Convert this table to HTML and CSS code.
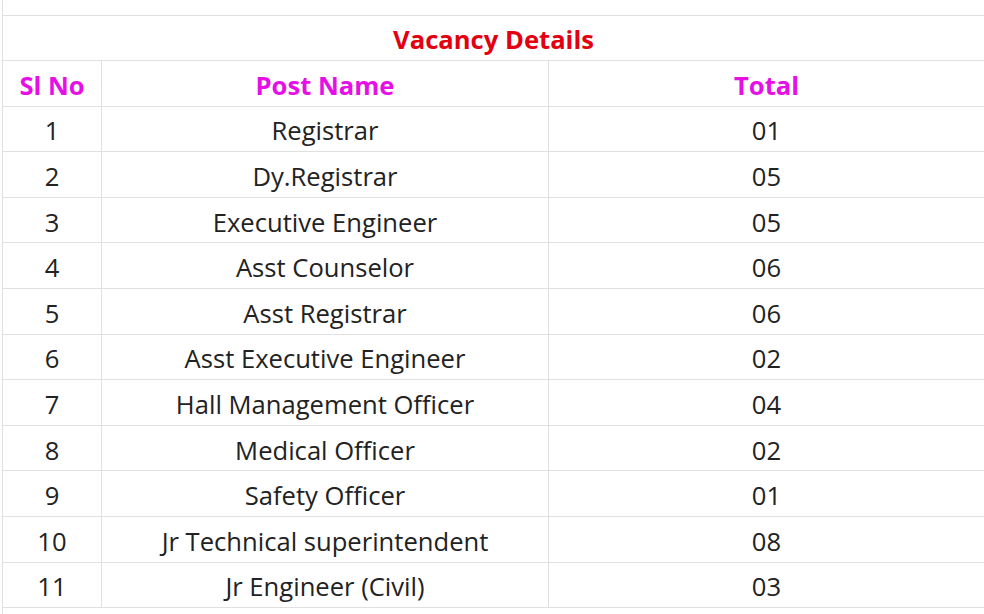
FILE: index.html
```html
<!DOCTYPE html>
<html>
<head>
<meta charset="utf-8">
<link rel="stylesheet" href="styles.css">
</head>
<body>
<table class="vacancy">
  <colgroup>
    <col class="c-no">
    <col class="c-post">
    <col class="c-total">
  </colgroup>
  <tr class="spacer"><td colspan="3"></td></tr>
  <tr class="title"><td colspan="3">Vacancy Details</td></tr>
  <tr class="head"><td>Sl No</td><td>Post Name</td><td>Total</td></tr>
  <tr><td>1</td><td>Registrar</td><td>01</td></tr>
  <tr><td>2</td><td>Dy.Registrar</td><td>05</td></tr>
  <tr><td>3</td><td>Executive Engineer</td><td>05</td></tr>
  <tr><td>4</td><td>Asst Counselor</td><td>06</td></tr>
  <tr><td>5</td><td>Asst Registrar</td><td>06</td></tr>
  <tr><td>6</td><td>Asst Executive Engineer</td><td>02</td></tr>
  <tr><td>7</td><td>Hall Management Officer</td><td>04</td></tr>
  <tr><td>8</td><td>Medical Officer</td><td>02</td></tr>
  <tr><td>9</td><td>Safety Officer</td><td>01</td></tr>
  <tr><td>10</td><td>Jr Technical superintendent</td><td>08</td></tr>
  <tr><td>11</td><td>Jr Engineer (Civil)</td><td>03</td></tr>
  <tr class="tail"><td colspan="3"></td></tr>
</table>
</body>
</html>
```
FILE: styles.css
```css
html, body {
  margin: 0;
  padding: 0;
  background: #ffffff;
}
body {
  padding-left: 2px;
  font-family: "Open Sans", "Noto Sans", "Liberation Sans", sans-serif;
  color: #222222;
}
.vacancy {
  border-collapse: collapse;
  table-layout: fixed;
  width: 982px;
}
.c-no { width: 99px; }
.c-post { width: 447px; }
.c-total { width: 436px; }
.vacancy td {
  border: 1px solid #e0e0e0;
  height: 45.6px;
  padding: 5px 0 0 0;
  text-align: center;
  vertical-align: middle;
  font-size: 25.6px;
  line-height: 30px;
  box-sizing: border-box;
}
.vacancy .spacer td {
  border-top: none;
  height: 15px;
  padding: 0;
}
.vacancy .tail td {
  border-bottom: none;
  height: 10px;
  padding: 0;
}
.vacancy .title td {
  color: #e3000f;
  font-weight: 700;
}
.vacancy .head td {
  color: #e60fe6;
  font-weight: 700;
}
```
